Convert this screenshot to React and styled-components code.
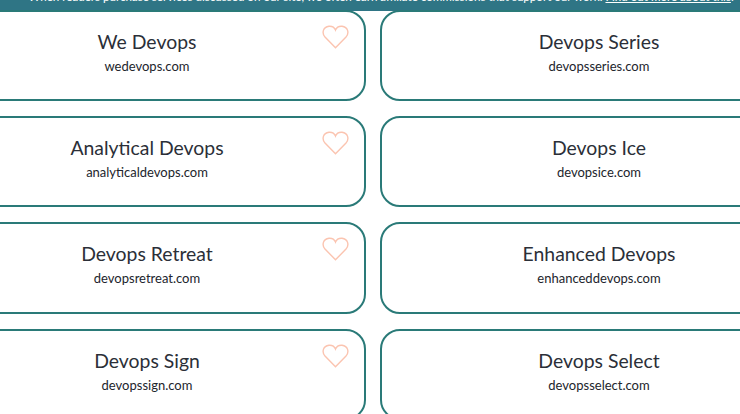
import React from "react";
import styled, { createGlobalStyle } from "styled-components";

const Global = createGlobalStyle`
  html, body { margin: 0; padding: 0; width: 740px; height: 414px; overflow: hidden; background: #fff; }
  * { box-sizing: border-box; }
`;
const Page = styled.div`
  width: 740px; height: 414px; overflow: hidden;
  font-family: Lato, "Liberation Sans", sans-serif; color: #2b2f38;
`;
const Banner = styled.div`
  height: 11px; background: #2f7585; color: #fff; font-size: 11.6px; line-height: 14px;
  display: flex; justify-content: center; align-items: flex-end; white-space: nowrap; overflow: hidden;
  padding: 0 0 7px 22px;
  a { color: #fff; text-decoration: underline; margin-left: 3px; }
`;
const Grid = styled.div`
  display: grid; grid-template-columns: 438px 438px; column-gap: 14px; row-gap: 15px;
  margin-left: -72px; margin-top: -1.4px; width: 890px;
`;
const Card = styled.div`
  position: relative; height: 91.3px; border: 2px solid #2a7a78; border-radius: 20px; background: #fff;
  display: flex; flex-direction: column; align-items: center; padding-top: 17px;
`;
const Name = styled.div`font-size: 19.4px; line-height: 26px;`;
const Domain = styled.div`font-size: 13px; line-height: 18px; margin-top: 2px; color: #22252c;`;
const Heart = styled.svg`
  position: absolute; top: 13px; right: 15px; width: 27px; height: 24px; fill: none; stroke: #fbc4b0; stroke-width: 1.4;
`;
const items = [
  ["We Devops", "wedevops.com", true], ["Devops Series", "devopsseries.com"],
  ["Analytical Devops", "analyticaldevops.com", true], ["Devops Ice", "devopsice.com"],
  ["Devops Retreat", "devopsretreat.com", true], ["Enhanced Devops", "enhanceddevops.com"],
  ["Devops Sign", "devopssign.com", true], ["Devops Select", "devopsselect.com"],
];
export default function App() {
  return (
    <Page>
      <Global />
      <Banner>When readers purchase services discussed on our site, we often earn affiliate commissions that support our work.<a href="#">Find out more about this</a>.</Banner>
      <Grid>
        {items.map(([n, d, h]) => (
          <Card key={n}>
            <Name>{n}</Name>
            <Domain>{d}</Domain>
            {h && (
              <Heart viewBox="0 0 27 24">
                <path d="M13.5 22.8 L3 12 C-0.5 8 1 2 7 1.2 C10 1 12.5 2.5 13.5 5 C14.5 2.5 17 1 20 1.2 C26 2 27.5 8 24 12 Z" />
              </Heart>
            )}
          </Card>
        ))}
      </Grid>
    </Page>
  );
}
